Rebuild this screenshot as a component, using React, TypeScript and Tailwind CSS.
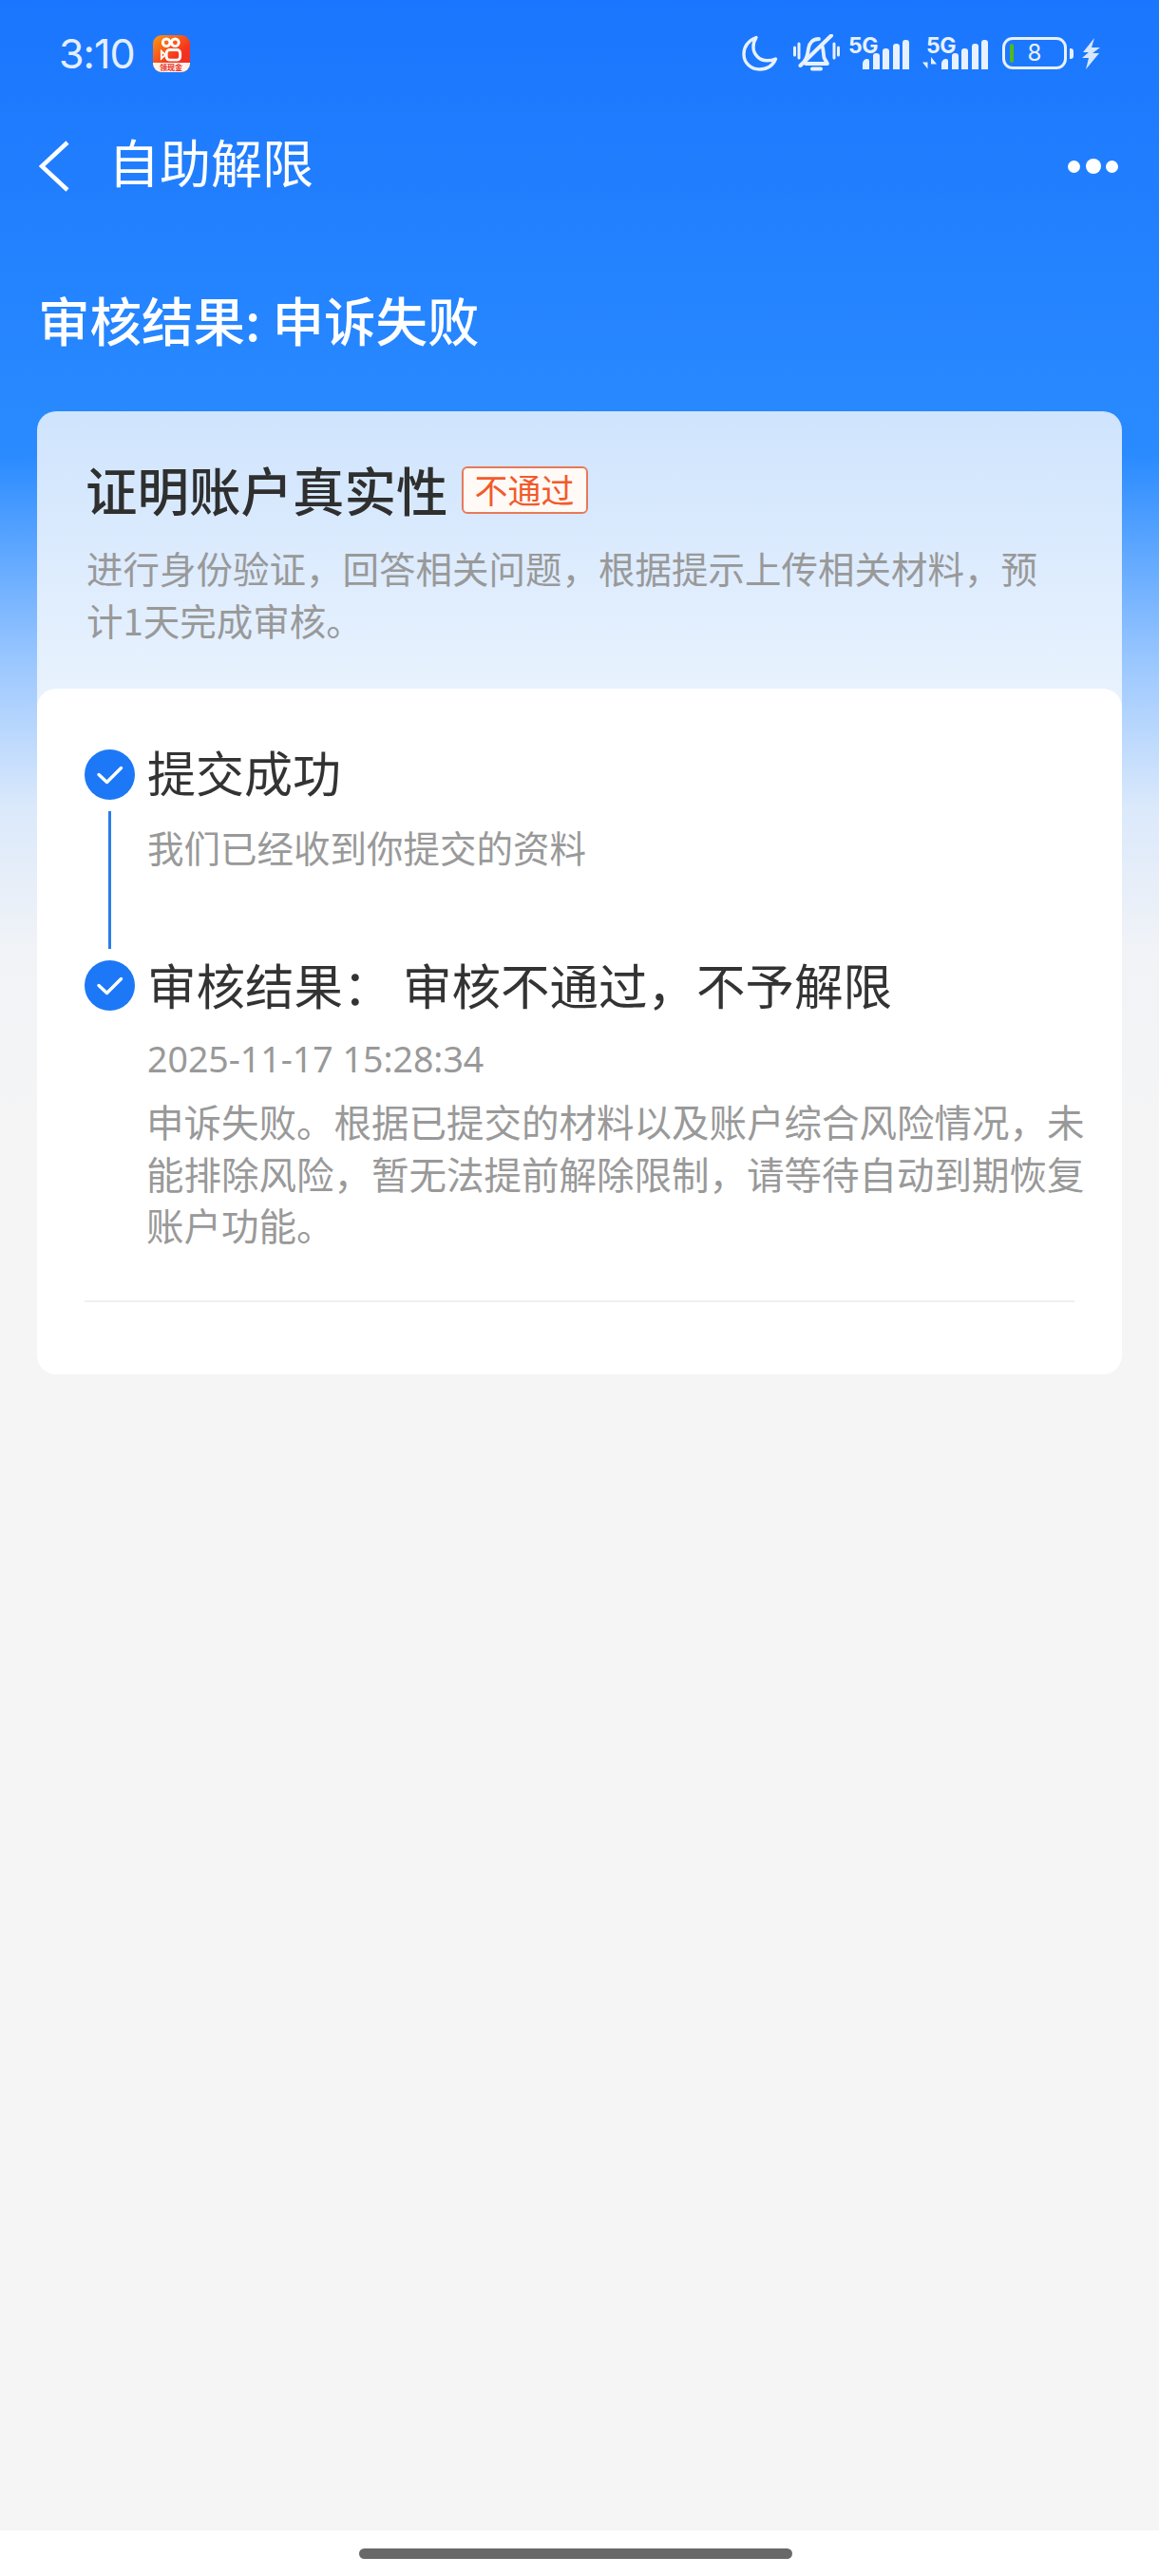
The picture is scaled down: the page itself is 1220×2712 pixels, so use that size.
const cjk = "font-['Noto_Sans_CJK_SC','Noto_Sans',sans-serif]";

function CheckDot() {
  return (
    <div className="w-[53px] h-[53px] rounded-full bg-[#1c78f6] flex items-center justify-center shrink-0">
      <svg width="30" height="24" viewBox="0 0 30 24" fill="none">
        <path d="M3 11.5 L11.5 19.5 L26.5 4.5" stroke="#fff" strokeWidth="3.4" strokeLinecap="round" strokeLinejoin="round" />
      </svg>
    </div>
  );
}

function Bars() {
  const heights = [11, 17, 22, 27, 31];
  return (
    <div className="absolute right-0 bottom-0 flex items-end gap-[3.5px]">
      {heights.map((h, i) => (
        <div
          key={h}
          className={`w-[7px] bg-[#e8f1fe] rounded-t-[3px] ${i === 0 ? "rounded-tl-[7px]" : ""}`}
          style={{ height: h }}
        />
      ))}
    </div>
  );
}

function FiveG({ className }: { className: string }) {
  return (
    <span className={`absolute top-[-3px] text-[23px] leading-[24px] font-bold tracking-[-0.5px] text-[#e8f1fe] font-['Inter',sans-serif] ${className}`}>
      5G
    </span>
  );
}

function StatusBar() {
  return (
    <div className="h-[112px] pl-[62px] pr-[62px] flex items-center">
      <span className="text-[43px] text-[#e4eeff] font-['Inter',sans-serif] leading-none tracking-[-1px]">3:10</span>
      {/* kuaishou notification icon */}
      <div className="ml-[19px] w-[39px] h-[39px] rounded-[9px] overflow-hidden bg-[linear-gradient(140deg,#fb9a12,#f5331f_60%,#ee2a26)] flex flex-col items-center">
        <svg className="mt-[2px]" width="24" height="27" viewBox="0 0 24 28" fill="none" stroke="#fff" strokeWidth="3">
          <circle cx="7" cy="6" r="4" />
          <circle cx="16.5" cy="6" r="4" />
          <rect x="7" y="14" width="15" height="11" rx="3.5" />
          <path d="M1.5 15.5 L6 19.5 L1.5 23.5 Z" strokeWidth="2" />
        </svg>
        <div className="w-full flex-1 bg-[#fff3ea] flex items-center justify-center">
          <span className={`${cjk} text-[8px] leading-none font-bold text-[#e32b1f]`}>领现金</span>
        </div>
      </div>
      <div className="ml-auto flex items-center">
        <svg width="38" height="38" viewBox="0 0 38 38" fill="none">
          <path d="M15 2.5 C6.5 6 2 12.5 2 20 C2 29.5 9.5 36 18.5 36 C26.5 36 32.5 32 35.5 25 C32.5 26.5 29.5 26.8 26.5 26.8 C18 26.8 12 20 12 12.5 C12 9 13 5.5 15 2.5 Z" stroke="#e8f1fe" strokeWidth="3.4" strokeLinejoin="round" />
        </svg>
        <svg className="ml-[16px]" width="49" height="40" viewBox="0 0 49 40" fill="none" stroke="#e8f1fe" strokeLinecap="round" strokeLinejoin="round">
          <path d="M1.5 14 V22 M6 10 V25 M43 10 V25 M47.5 14 V22" strokeWidth="3" />
          <path d="M13 31 H36 L32.5 25 C31.5 20 32 15 30 11.5 M12 28 C15 24 15.5 19 16 15 C17 9 21 5 27 5" strokeWidth="3.8" />
          <path d="M20 36.5 H29" strokeWidth="4" />
          <path d="M7.5 33 L40 1.5" strokeWidth="4" />
        </svg>
        <div className="relative ml-[9px] w-[64px] h-[34px] shrink-0">
          <FiveG className="left-0" />
          <Bars />
        </div>
        <div className="relative ml-[14px] w-[69px] h-[34px] shrink-0">
          <FiveG className="left-[4px]" />
          <svg className="absolute left-0 bottom-0" width="15" height="13" viewBox="0 0 15 13" fill="#e8f1fe">
            <path d="M5.5 0 V5.5 H0 L5.5 12.5 Z M9 13 V7.5 H15 L9 0 Z" />
          </svg>
          <Bars />
        </div>
        <div className="ml-[15px] w-[68px] h-[34px] rounded-[11px] border-[3px] border-[#e8f1fe] relative flex items-center justify-center">
          <div className="absolute left-[5px] top-[4px] w-[4px] h-[20px] rounded-full bg-[#52b81f]" />
          <span className="text-[24px] leading-none text-[#e8f1fe] font-['Inter',sans-serif]">8</span>
        </div>
        <div className="ml-[3px] w-[4px] h-[11px] rounded-r-[3px] bg-[#e8f1fe]" />
        <svg className="ml-[9px]" width="19" height="33" viewBox="0 0 19 33" fill="#d8e7fd">
          <path d="M13 0 L1 15 H7 L0 21 H7 L4 33 L18 16 H11 L19 10 H10 Z" />
        </svg>
      </div>
    </div>
  );
}

function NavBar() {
  return (
    <div className="h-[126px] pl-[41px] pr-[43px] flex items-center">
      <svg width="32" height="54" viewBox="0 0 32 54" fill="none">
        <path d="M30 2 L3 27 L30 52" stroke="#fff" strokeWidth="4.5" strokeLinejoin="miter" />
      </svg>
      <span className={`${cjk} ml-[41px] mb-[10px] text-[54px] leading-none text-white`}>自助解限</span>
      <div className="ml-auto flex items-center gap-[5.5px]">
        <div className="w-[13px] h-[13px] rounded-full bg-white" />
        <div className="w-[16px] h-[16px] rounded-full bg-white" />
        <div className="w-[13px] h-[13px] rounded-full bg-white" />
      </div>
    </div>
  );
}

export default function App() {
  return (
    <div className={`${cjk} w-[1220px] h-[2712px] flex flex-col bg-[linear-gradient(180deg,#1a76fe_0px,#2a8bff_480px,#9cc8ff_700px,#dbe9fb_850px,#f1f3f7_1000px,#f5f5f5_1200px)]`}>
      <StatusBar />
      <NavBar />

      <h1 className="pl-[40px] mt-[58px] text-[54.5px] leading-[80px] font-medium text-white">审核结果: 申诉失败</h1>

      <div className="mx-[39px] mt-[57px] rounded-[20px] bg-[linear-gradient(180deg,#cfe4fd_0px,#e8f2fe_292px)]">
        <div className="h-[292px] pl-[52px] pr-[80px] pt-[57px]">
          <div className="flex items-center h-[50px] -ml-[1px]">
            <h2 className="text-[54.5px] leading-none font-medium text-[#2f2f2f]">证明账户真实性</h2>
            <span className="ml-[14px] mt-[2px] w-[133px] h-[50px] rounded-[6px] border-2 border-[#e8795a] bg-[#fffaf6] text-[#f25a2b] text-[35px] leading-[44px] text-center">不通过</span>
          </div>
          <p className="mt-[30px] text-[38.5px] leading-[55px] text-[#999]">
            进行身份验证，回答相关问题，根据提示上传相关材料，预计1天完成审核。
          </p>
        </div>

        <div className="h-[722px] rounded-[20px] bg-white pl-[50px] pr-[36px] pt-[64px]">
          <div className="flex items-center gap-[13px] h-[53px]">
            <CheckDot />
            <span className="mb-[6px] text-[51px] leading-none text-[#333]">提交成功</span>
          </div>
          <div className="flex">
            <div className="w-[53px] flex justify-center pt-[12px]">
              <div className="w-[3px] h-[145px] bg-[#2a7de8]" />
            </div>
            <p className="ml-[13px] mt-[22px] text-[38.5px] leading-[55px] text-[#999]">我们已经收到你提交的资料</p>
          </div>
          <div className="flex items-center gap-[13px] h-[53px] mt-[12px]">
            <CheckDot />
            <span className="mb-[4px] text-[51.5px] leading-none text-[#333]">审核结果： 审核不通过，不予解限</span>
          </div>
          <div className="ml-[65px]">
            <p className="mt-[23px] pl-[1px] text-[37.5px] leading-[55px] text-[#999] font-['Noto_Sans',sans-serif]">2025-11-17 15:28:34</p>
            <p className="mt-[11px] text-[39.5px] leading-[54.5px] text-[#999]">
              申诉失败。根据已提交的材料以及账户综合风险情况，未能排除风险，暂无法提前解除限制，请等待自动到期恢复账户功能。
            </p>
          </div>
          <div className="mt-[52px] mr-[14px] border-t-2 border-[#f0f0f0]" />
        </div>
      </div>

      <div className="mt-auto h-[48px] bg-white flex justify-center pt-[19px] pr-[8px]">
        <div className="w-[456px] h-[11px] rounded-full bg-[#696969]" />
      </div>
    </div>
  );
}
